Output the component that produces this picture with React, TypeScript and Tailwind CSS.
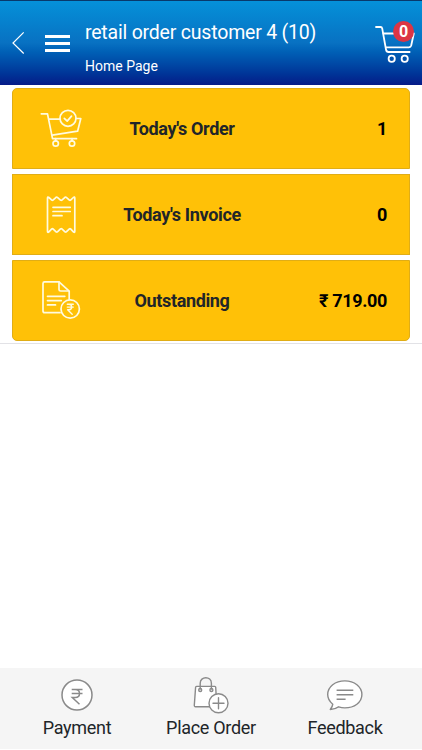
import type { ReactNode } from "react";

function HeaderCart() {
  return (
    <svg width="40" height="42" viewBox="0 0 40 42" fill="none" stroke="#fff" strokeWidth="1.8" strokeLinecap="round" strokeLinejoin="round">
      <path d="M1 5h4.5q1.4 0 1.7 1.4L11 27.5q.4 2.5 2.6 2.5h21" />
      <path d="M8.4 11.5h30.4l-2.6 12q-.5 1.8-2.2 1.8H11" />
      <circle cx="16.7" cy="36.7" r="3.1" />
      <circle cx="29.7" cy="36.7" r="3.1" />
    </svg>
  );
}

function OrderIcon() {
  return (
    <svg width="44" height="42" viewBox="0 0 44 42" fill="none" stroke="#fffbe0" strokeWidth="1.7" strokeLinecap="round" strokeLinejoin="round">
      <path d="M1.3 5.8h6.2l5 24.9h24" />
      <path d="M8.8 11.2h11.4M36 10.5h4.8l-3.2 12.7-25.3 3.9" />
      <circle cx="28" cy="10.3" r="8" />
      <path d="M24.3 10.3l2.9 2.8 4.3-5" />
      <path d="M15.7 30.7v2M32 30.7v2" />
      <circle cx="15.7" cy="35.5" r="2.7" />
      <circle cx="32" cy="35.5" r="2.7" />
    </svg>
  );
}

function InvoiceIcon() {
  return (
    <svg width="44" height="42" viewBox="0 0 44 42" fill="none" stroke="#fffbe0" strokeWidth="1.7" strokeLinecap="round" strokeLinejoin="round">
      <path d="M7.5 4.2q0-1.8 1.4-.7l2.9 2.6q.6.4 1.2 0l3.1-2.8q.7-.5 1.3 0l3.1 2.8q.7.5 1.4 0l3.1-2.8q.7-.5 1.3 0l3.1 2.8q.6.4 1.2 0l2.8-2.6q1.4-1.1 1.4.7v33q0 1.8-1.4.7l-2.8-3q-.6-.4-1.2 0l-3.1 3q-.6.5-1.3 0l-3.1-3q-.7-.5-1.4 0l-3.1 3q-.6.5-1.3 0l-3.1-3q-.6-.4-1.2 0l-2.9 3q-1.4 1.1-1.4-.7z" />
      <path d="M13 13.3h17.2M13 17.5h17.2M13 21.7h9" />
    </svg>
  );
}

function OutstandingIcon() {
  return (
    <svg width="44" height="42" viewBox="0 0 44 42" fill="none" stroke="#fffbe0" strokeWidth="1.7" strokeLinecap="round" strokeLinejoin="round">
      <path d="M20 32.7H4.6q-1.6 0-1.6-1.6V3.4q0-1.6 1.6-1.6H19l10.2 9.4v8" />
      <path d="M19 1.8v7.6q0 1.6 1.6 1.6h8" />
      <path d="M7.5 16.3h17.3M7.5 20.6h13.8M7.5 24.9h8" />
      <circle cx="30.2" cy="29" r="9.2" />
      <path d="M27.3 24.3h6M27.3 27.1h6M27.3 24.3h1.6c3.7 0 3.7 5.5 0 5.5h-1.3l4.6 4.4" strokeWidth="1.4" />
    </svg>
  );
}

function PaymentIcon() {
  return (
    <svg width="40" height="38" viewBox="0 0 40 38" fill="none" stroke="#8a8a8a" strokeWidth="1.5">
      <circle cx="20" cy="19" r="15" fill="#fff" />
      <path d="M14.7 13.6h10.8M14.7 17.6h10.8M14.7 13.6h3.6c5.6 0 5.6 8 0 8h-3l7.2 6.6" />
    </svg>
  );
}

function PlaceOrderIcon() {
  return (
    <svg width="40" height="38" viewBox="0 0 40 38" fill="none" stroke="#8a8a8a" strokeWidth="1.4" strokeLinecap="round" strokeLinejoin="round">
      <path d="M5.5 10.4h18.3q.8 0 .9.9l1.1 19.4H4.5q-1.3 0-1.2-1.3l1.3-18.1q.1-.9.9-.9z" fill="#fff" />
      <path d="M9.2 13V7.2c0-7.2 11.2-7.2 11.2 0V13" />
      <circle cx="9.2" cy="14" r="1.5" />
      <circle cx="20.4" cy="14" r="1.5" />
      <circle cx="27.5" cy="27.2" r="9.5" fill="#fff" />
      <path d="M27.5 21.7v11M22 27.2h11" />
    </svg>
  );
}

function FeedbackIcon() {
  return (
    <svg width="40" height="38" viewBox="0 0 40 38" fill="none" stroke="#8a8a8a" strokeWidth="1.4" strokeLinejoin="round">
      <path d="M5.3 33.5c1.7-2 2.3-3.5 2.5-5.3C4.6 25.7 2.7 22.3 2.7 18.6c0-7.9 7.6-13.7 17.1-13.7s17.1 5.8 17.1 13.7-7.6 13.3-17.1 13.3c-2.2 0-4.3-.4-6.2-1.1-2 1.7-4.7 2.6-8.3 2.7z" fill="#fff" />
      <path d="M11.6 14.3h16.7M11.6 18.8h16.7M11.6 23.2h9" />
    </svg>
  );
}

function Card({ icon, label, value, className = "" }: { icon: ReactNode; label: string; value: string; className?: string }) {
  return (
    <div className={`flex h-[81px] items-center border border-[#e0ad16] bg-[#ffc107] pl-[27px] pr-[22px] text-[18px] font-bold ${className}`}>
      <div className="w-11 shrink-0">{icon}</div>
      <div className="w-[196px] shrink-0 pb-px text-center tracking-[-0.35px] text-[#212529]">{label}</div>
      <div className="flex-1 whitespace-nowrap pb-px text-right tracking-[-0.35px] text-black">{value}</div>
    </div>
  );
}

function Tab({ icon, label }: { icon: ReactNode; label: string }) {
  return (
    <button className="flex w-[134px] flex-col items-center pt-2 text-[18px] leading-[27px] tracking-[-0.3px] text-[#212529]">
      {icon}
      <span className="whitespace-nowrap">{label}</span>
    </button>
  );
}

export default function App() {
  return (
    <div className="flex h-[750px] w-[422px] flex-col overflow-hidden bg-white font-['Roboto',sans-serif]">
      {/* Header */}
      <header className="flex h-[85px] shrink-0 border-t border-[#08396b] bg-linear-to-b from-[#0591d9] via-[#0871c2] to-[#061a88] text-white">
        <svg className="ml-3 mt-[30px]" width="14" height="24" viewBox="0 0 14 24" fill="none" stroke="#fff" strokeWidth="1.2">
          <path d="M11.7 1.3L1 12l10.7 10.5" />
        </svg>
        <div className="ml-[19px] mt-[34px] flex w-[25px] flex-col gap-1">
          <span className="h-[3px] bg-white" />
          <span className="h-[3px] bg-white" />
          <span className="h-[3px] bg-white" />
        </div>
        <div className="ml-[15px] flex-1 pt-[17px]">
          <h1 className="whitespace-nowrap text-[19.5px] leading-[30px] tracking-[-0.2px]">retail order customer 4 (10)</h1>
          <p className="mt-2 text-[14px] leading-5">Home Page</p>
        </div>
        <div className="relative mr-[7px] mt-[21px]">
          <HeaderCart />
          <span className="absolute left-[18px] top-[-1px] flex h-[21px] w-[21px] items-center justify-center rounded-full bg-[#dc3545] text-[16px] font-bold leading-none">
            0
          </span>
        </div>
      </header>

      {/* Summary cards */}
      <main className="flex flex-col gap-[5px] border-b border-[#e2e2e6] px-3 pb-[2px] pt-[3px]">
        <Card className="rounded-t-[5px]" icon={<OrderIcon />} label="Today's Order" value="1" />
        <Card icon={<InvoiceIcon />} label="Today's Invoice" value="0" />
        <Card className="rounded-b-[5px]" icon={<OutstandingIcon />} label="Outstanding" value="₹ 719.00" />
      </main>

      {/* Bottom menu */}
      <footer className="mb-px mt-auto flex h-[81px] shrink-0 justify-center bg-[#f5f5f5]">
        <Tab icon={<PaymentIcon />} label="Payment" />
        <Tab icon={<PlaceOrderIcon />} label="Place Order" />
        <Tab icon={<FeedbackIcon />} label="Feedback" />
      </footer>
    </div>
  );
}
